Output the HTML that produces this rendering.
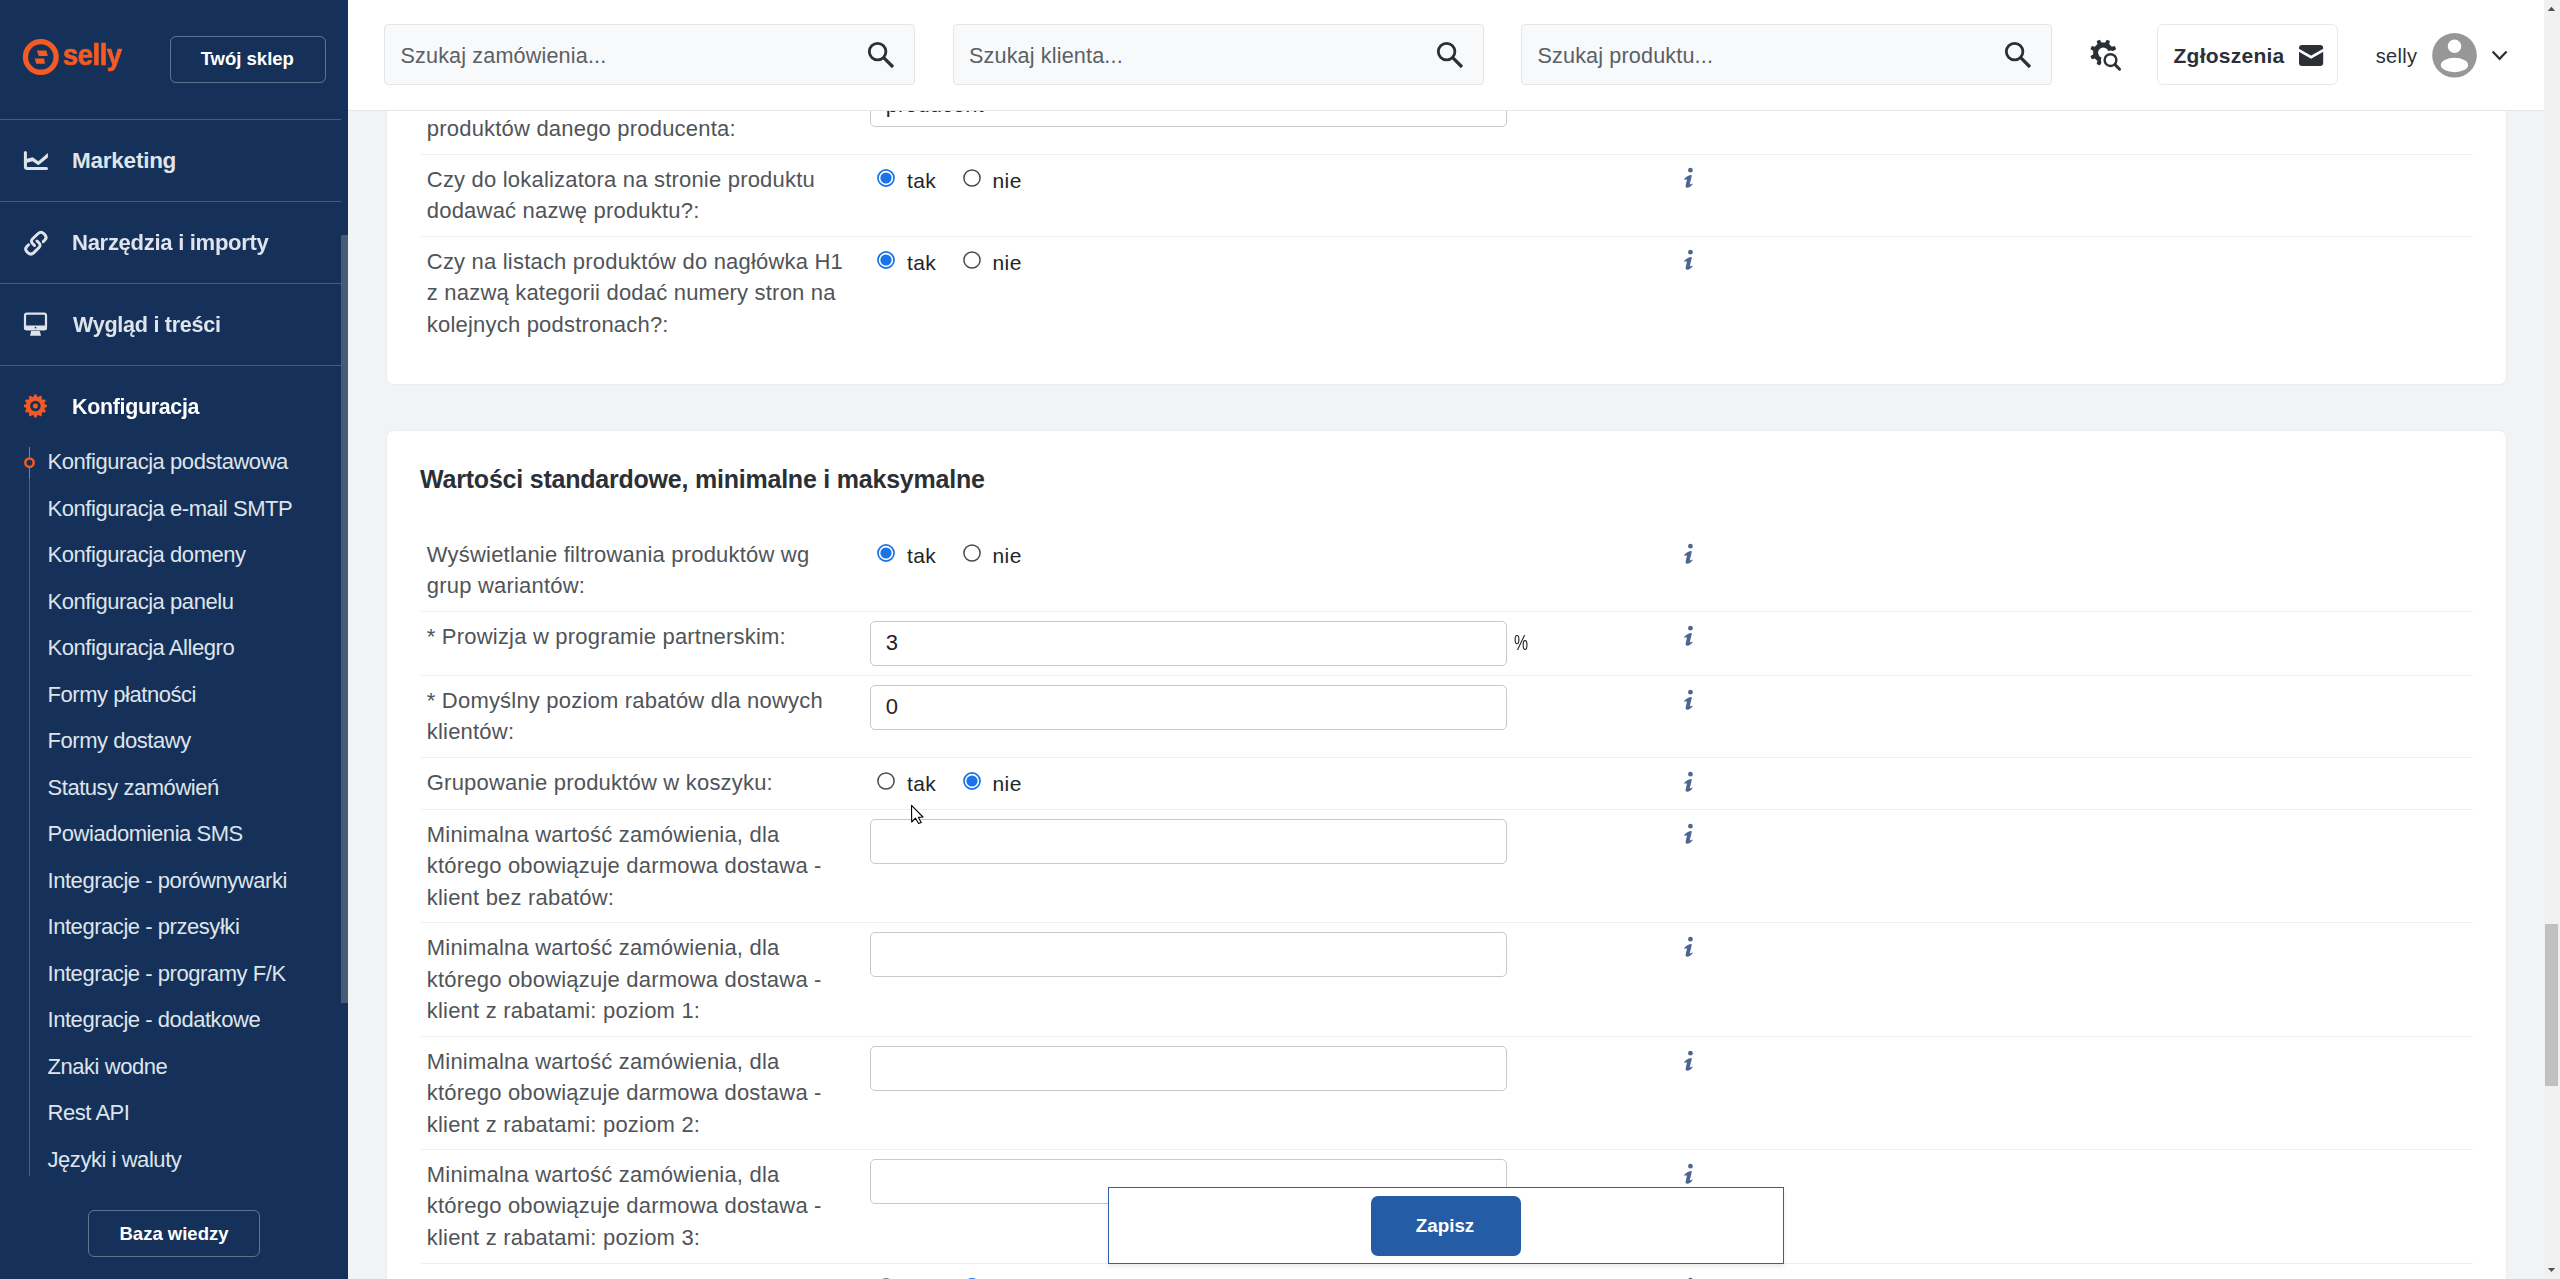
<!DOCTYPE html>
<html><head><meta charset="utf-8"><style>
html,body{margin:0;padding:0;width:2560px;height:1279px;overflow:hidden;background:#f2f3f5;}
body{position:relative;font-family:"Liberation Sans",sans-serif;}
.t{position:absolute;white-space:nowrap;}
svg{overflow:visible}
</style></head><body>
<div style="position:absolute;left:348px;top:110px;width:2196px;height:1169px;background:#f2f3f5"></div>
<div style="position:absolute;left:387px;top:60px;width:2119px;height:324px;background:#fff;border-radius:7px;box-shadow:0 0 0 1px #ebedf0"></div>
<div style="position:absolute;left:387px;top:430.5px;width:2119px;height:1000px;background:#fff;border-radius:7px;box-shadow:0 0 0 1px #ebedf0"></div>
<div class="t" style="left:426.80px;top:86.37px;font-size:22px;line-height:22px;font-weight:400;color:#505459;letter-spacing:0.2px;">Czy wyświetlać ...</div>
<div class="t" style="left:426.80px;top:117.77px;font-size:22px;line-height:22px;font-weight:400;color:#505459;letter-spacing:0.2px;">produktów danego producenta:</div>
<div style="position:absolute;left:869.5px;top:82px;width:637.5px;height:45px;box-sizing:border-box;border:1px solid #c5c9cc;border-radius:5px;background:#fff"></div>
<div class="t" style="left:885.70px;top:94.07px;font-size:22px;line-height:22px;font-weight:400;color:#212529;letter-spacing:0px;">producent</div>
<div style="position:absolute;left:421px;top:154px;width:2052px;height:1px;background:#eeeeed"></div>
<div class="t" style="left:426.80px;top:168.77px;font-size:22px;line-height:22px;font-weight:400;color:#505459;letter-spacing:0.2px;">Czy do lokalizatora na stronie produktu</div>
<div class="t" style="left:426.80px;top:200.17px;font-size:22px;line-height:22px;font-weight:400;color:#505459;letter-spacing:0.2px;">dodawać nazwę produktu?:</div>
<svg style="position:absolute;left:876px;top:167.7px;" width="20" height="20" viewBox="876 167.7 20 20"><circle cx="886" cy="177.7" r="8.05" fill="none" stroke="#1a73e8" stroke-width="1.7"/><circle cx="886" cy="177.7" r="5.6" fill="#1a73e8"/></svg>
<svg style="position:absolute;left:962px;top:167.7px;" width="20" height="20" viewBox="962 167.7 20 20"><circle cx="972" cy="177.7" r="8.1" fill="#fff" stroke="#4a4a4a" stroke-width="1.5"/></svg>
<div class="t" style="left:907.00px;top:170.02px;font-size:21px;line-height:21px;font-weight:400;color:#212529;letter-spacing:0.4px;">tak</div>
<div class="t" style="left:992.50px;top:170.02px;font-size:21px;line-height:21px;font-weight:400;color:#212529;letter-spacing:0.4px;">nie</div>
<svg style="position:absolute;left:1684px;top:168px;" width="10" height="21" viewBox="1684 168 10 21"><g transform="translate(1684 168)" fill="#4e6591"><circle cx="6.45" cy="2.15" r="2.35"/><path d="M0.1,11 C1.5,9.5 4.2,7.3 6.9,7.1 C7.5,7.1 7.9,7.6 7.7,8.3 L5.7,16.5 C6.7,16.3 7.8,15.8 8.9,15.4 C8,17.4 6,19.5 3.6,19.7 C2.3,19.8 1.4,19.2 1.6,17.8 L3,11.5 C2.1,11.5 1.2,11.7 0.4,11.8 Z"/></g></svg>
<div style="position:absolute;left:421px;top:236px;width:2052px;height:1px;background:#eeeeed"></div>
<div class="t" style="left:426.80px;top:250.77px;font-size:22px;line-height:22px;font-weight:400;color:#505459;letter-spacing:0.2px;">Czy na listach produktów do nagłówka H1</div>
<div class="t" style="left:426.80px;top:282.17px;font-size:22px;line-height:22px;font-weight:400;color:#505459;letter-spacing:0.2px;">z nazwą kategorii dodać numery stron na</div>
<div class="t" style="left:426.80px;top:313.57px;font-size:22px;line-height:22px;font-weight:400;color:#505459;letter-spacing:0.2px;">kolejnych podstronach?:</div>
<svg style="position:absolute;left:876px;top:249.7px;" width="20" height="20" viewBox="876 249.7 20 20"><circle cx="886" cy="259.7" r="8.05" fill="none" stroke="#1a73e8" stroke-width="1.7"/><circle cx="886" cy="259.7" r="5.6" fill="#1a73e8"/></svg>
<svg style="position:absolute;left:962px;top:249.7px;" width="20" height="20" viewBox="962 249.7 20 20"><circle cx="972" cy="259.7" r="8.1" fill="#fff" stroke="#4a4a4a" stroke-width="1.5"/></svg>
<div class="t" style="left:907.00px;top:252.02px;font-size:21px;line-height:21px;font-weight:400;color:#212529;letter-spacing:0.4px;">tak</div>
<div class="t" style="left:992.50px;top:252.02px;font-size:21px;line-height:21px;font-weight:400;color:#212529;letter-spacing:0.4px;">nie</div>
<svg style="position:absolute;left:1684px;top:250px;" width="10" height="21" viewBox="1684 250 10 21"><g transform="translate(1684 250)" fill="#4e6591"><circle cx="6.45" cy="2.15" r="2.35"/><path d="M0.1,11 C1.5,9.5 4.2,7.3 6.9,7.1 C7.5,7.1 7.9,7.6 7.7,8.3 L5.7,16.5 C6.7,16.3 7.8,15.8 8.9,15.4 C8,17.4 6,19.5 3.6,19.7 C2.3,19.8 1.4,19.2 1.6,17.8 L3,11.5 C2.1,11.5 1.2,11.7 0.4,11.8 Z"/></g></svg>
<div class="t" style="left:420.10px;top:467.43px;font-size:25px;line-height:25px;font-weight:700;color:#2b3036;letter-spacing:-0.22px;">Wartości standardowe, minimalne i maksymalne</div>
<div class="t" style="left:426.80px;top:543.77px;font-size:22px;line-height:22px;font-weight:400;color:#505459;letter-spacing:0.2px;">Wyświetlanie filtrowania produktów wg</div>
<div class="t" style="left:426.80px;top:575.17px;font-size:22px;line-height:22px;font-weight:400;color:#505459;letter-spacing:0.2px;">grup wariantów:</div>
<svg style="position:absolute;left:876px;top:542.9px;" width="20" height="20" viewBox="876 542.9 20 20"><circle cx="886" cy="552.9" r="8.05" fill="none" stroke="#1a73e8" stroke-width="1.7"/><circle cx="886" cy="552.9" r="5.6" fill="#1a73e8"/></svg>
<svg style="position:absolute;left:962px;top:542.9px;" width="20" height="20" viewBox="962 542.9 20 20"><circle cx="972" cy="552.9" r="8.1" fill="#fff" stroke="#4a4a4a" stroke-width="1.5"/></svg>
<div class="t" style="left:907.00px;top:545.22px;font-size:21px;line-height:21px;font-weight:400;color:#212529;letter-spacing:0.4px;">tak</div>
<div class="t" style="left:992.50px;top:545.22px;font-size:21px;line-height:21px;font-weight:400;color:#212529;letter-spacing:0.4px;">nie</div>
<svg style="position:absolute;left:1684px;top:544px;" width="10" height="21" viewBox="1684 544 10 21"><g transform="translate(1684 544)" fill="#4e6591"><circle cx="6.45" cy="2.15" r="2.35"/><path d="M0.1,11 C1.5,9.5 4.2,7.3 6.9,7.1 C7.5,7.1 7.9,7.6 7.7,8.3 L5.7,16.5 C6.7,16.3 7.8,15.8 8.9,15.4 C8,17.4 6,19.5 3.6,19.7 C2.3,19.8 1.4,19.2 1.6,17.8 L3,11.5 C2.1,11.5 1.2,11.7 0.4,11.8 Z"/></g></svg>
<div style="position:absolute;left:421px;top:611px;width:2052px;height:1px;background:#eeeeed"></div>
<div class="t" style="left:426.80px;top:625.77px;font-size:22px;line-height:22px;font-weight:400;color:#505459;letter-spacing:0.2px;">* Prowizja w programie partnerskim:</div>
<div style="position:absolute;left:869.5px;top:621px;width:637.5px;height:45px;box-sizing:border-box;border:1px solid #c5c9cc;border-radius:5px;background:#fff"></div>
<div class="t" style="left:885.70px;top:632.37px;font-size:22px;line-height:22px;font-weight:400;color:#212529;letter-spacing:0px;">3</div>
<svg style="position:absolute;left:1684px;top:626px;" width="10" height="21" viewBox="1684 626 10 21"><g transform="translate(1684 626)" fill="#4e6591"><circle cx="6.45" cy="2.15" r="2.35"/><path d="M0.1,11 C1.5,9.5 4.2,7.3 6.9,7.1 C7.5,7.1 7.9,7.6 7.7,8.3 L5.7,16.5 C6.7,16.3 7.8,15.8 8.9,15.4 C8,17.4 6,19.5 3.6,19.7 C2.3,19.8 1.4,19.2 1.6,17.8 L3,11.5 C2.1,11.5 1.2,11.7 0.4,11.8 Z"/></g></svg>
<div class="t" style="left:1514.20px;top:632.37px;font-size:22px;line-height:22px;font-weight:400;color:#212529;letter-spacing:0px;transform:scaleX(0.72);transform-origin:0 0">%</div>
<div style="position:absolute;left:421px;top:675px;width:2052px;height:1px;background:#eeeeed"></div>
<div class="t" style="left:426.80px;top:689.77px;font-size:22px;line-height:22px;font-weight:400;color:#505459;letter-spacing:0.2px;">* Domyślny poziom rabatów dla nowych</div>
<div class="t" style="left:426.80px;top:721.17px;font-size:22px;line-height:22px;font-weight:400;color:#505459;letter-spacing:0.2px;">klientów:</div>
<div style="position:absolute;left:869.5px;top:685px;width:637.5px;height:45px;box-sizing:border-box;border:1px solid #c5c9cc;border-radius:5px;background:#fff"></div>
<div class="t" style="left:885.70px;top:696.37px;font-size:22px;line-height:22px;font-weight:400;color:#212529;letter-spacing:0px;">0</div>
<svg style="position:absolute;left:1684px;top:690px;" width="10" height="21" viewBox="1684 690 10 21"><g transform="translate(1684 690)" fill="#4e6591"><circle cx="6.45" cy="2.15" r="2.35"/><path d="M0.1,11 C1.5,9.5 4.2,7.3 6.9,7.1 C7.5,7.1 7.9,7.6 7.7,8.3 L5.7,16.5 C6.7,16.3 7.8,15.8 8.9,15.4 C8,17.4 6,19.5 3.6,19.7 C2.3,19.8 1.4,19.2 1.6,17.8 L3,11.5 C2.1,11.5 1.2,11.7 0.4,11.8 Z"/></g></svg>
<div style="position:absolute;left:421px;top:757px;width:2052px;height:1px;background:#eeeeed"></div>
<div class="t" style="left:426.80px;top:771.77px;font-size:22px;line-height:22px;font-weight:400;color:#505459;letter-spacing:0.2px;">Grupowanie produktów w koszyku:</div>
<svg style="position:absolute;left:876px;top:770.9px;" width="20" height="20" viewBox="876 770.9 20 20"><circle cx="886" cy="780.9" r="8.1" fill="#fff" stroke="#4a4a4a" stroke-width="1.5"/></svg>
<svg style="position:absolute;left:962px;top:770.9px;" width="20" height="20" viewBox="962 770.9 20 20"><circle cx="972" cy="780.9" r="8.05" fill="none" stroke="#1a73e8" stroke-width="1.7"/><circle cx="972" cy="780.9" r="5.6" fill="#1a73e8"/></svg>
<div class="t" style="left:907.00px;top:773.22px;font-size:21px;line-height:21px;font-weight:400;color:#212529;letter-spacing:0.4px;">tak</div>
<div class="t" style="left:992.50px;top:773.22px;font-size:21px;line-height:21px;font-weight:400;color:#212529;letter-spacing:0.4px;">nie</div>
<svg style="position:absolute;left:1684px;top:772px;" width="10" height="21" viewBox="1684 772 10 21"><g transform="translate(1684 772)" fill="#4e6591"><circle cx="6.45" cy="2.15" r="2.35"/><path d="M0.1,11 C1.5,9.5 4.2,7.3 6.9,7.1 C7.5,7.1 7.9,7.6 7.7,8.3 L5.7,16.5 C6.7,16.3 7.8,15.8 8.9,15.4 C8,17.4 6,19.5 3.6,19.7 C2.3,19.8 1.4,19.2 1.6,17.8 L3,11.5 C2.1,11.5 1.2,11.7 0.4,11.8 Z"/></g></svg>
<div style="position:absolute;left:421px;top:809px;width:2052px;height:1px;background:#eeeeed"></div>
<div class="t" style="left:426.80px;top:823.77px;font-size:22px;line-height:22px;font-weight:400;color:#505459;letter-spacing:0.2px;">Minimalna wartość zamówienia, dla</div>
<div class="t" style="left:426.80px;top:855.17px;font-size:22px;line-height:22px;font-weight:400;color:#505459;letter-spacing:0.2px;">którego obowiązuje darmowa dostawa -</div>
<div class="t" style="left:426.80px;top:886.57px;font-size:22px;line-height:22px;font-weight:400;color:#505459;letter-spacing:0.2px;">klient bez rabatów:</div>
<div style="position:absolute;left:869.5px;top:819px;width:637.5px;height:45px;box-sizing:border-box;border:1px solid #c5c9cc;border-radius:5px;background:#fff"></div>
<svg style="position:absolute;left:1684px;top:824px;" width="10" height="21" viewBox="1684 824 10 21"><g transform="translate(1684 824)" fill="#4e6591"><circle cx="6.45" cy="2.15" r="2.35"/><path d="M0.1,11 C1.5,9.5 4.2,7.3 6.9,7.1 C7.5,7.1 7.9,7.6 7.7,8.3 L5.7,16.5 C6.7,16.3 7.8,15.8 8.9,15.4 C8,17.4 6,19.5 3.6,19.7 C2.3,19.8 1.4,19.2 1.6,17.8 L3,11.5 C2.1,11.5 1.2,11.7 0.4,11.8 Z"/></g></svg>
<div style="position:absolute;left:421px;top:922px;width:2052px;height:1px;background:#eeeeed"></div>
<div class="t" style="left:426.80px;top:937.17px;font-size:22px;line-height:22px;font-weight:400;color:#505459;letter-spacing:0.2px;">Minimalna wartość zamówienia, dla</div>
<div class="t" style="left:426.80px;top:968.57px;font-size:22px;line-height:22px;font-weight:400;color:#505459;letter-spacing:0.2px;">którego obowiązuje darmowa dostawa -</div>
<div class="t" style="left:426.80px;top:999.97px;font-size:22px;line-height:22px;font-weight:400;color:#505459;letter-spacing:0.2px;">klient z rabatami: poziom 1:</div>
<div style="position:absolute;left:869.5px;top:932px;width:637.5px;height:45px;box-sizing:border-box;border:1px solid #c5c9cc;border-radius:5px;background:#fff"></div>
<svg style="position:absolute;left:1684px;top:937px;" width="10" height="21" viewBox="1684 937 10 21"><g transform="translate(1684 937)" fill="#4e6591"><circle cx="6.45" cy="2.15" r="2.35"/><path d="M0.1,11 C1.5,9.5 4.2,7.3 6.9,7.1 C7.5,7.1 7.9,7.6 7.7,8.3 L5.7,16.5 C6.7,16.3 7.8,15.8 8.9,15.4 C8,17.4 6,19.5 3.6,19.7 C2.3,19.8 1.4,19.2 1.6,17.8 L3,11.5 C2.1,11.5 1.2,11.7 0.4,11.8 Z"/></g></svg>
<div style="position:absolute;left:421px;top:1036px;width:2052px;height:1px;background:#eeeeed"></div>
<div class="t" style="left:426.80px;top:1050.77px;font-size:22px;line-height:22px;font-weight:400;color:#505459;letter-spacing:0.2px;">Minimalna wartość zamówienia, dla</div>
<div class="t" style="left:426.80px;top:1082.17px;font-size:22px;line-height:22px;font-weight:400;color:#505459;letter-spacing:0.2px;">którego obowiązuje darmowa dostawa -</div>
<div class="t" style="left:426.80px;top:1113.57px;font-size:22px;line-height:22px;font-weight:400;color:#505459;letter-spacing:0.2px;">klient z rabatami: poziom 2:</div>
<div style="position:absolute;left:869.5px;top:1046px;width:637.5px;height:45px;box-sizing:border-box;border:1px solid #c5c9cc;border-radius:5px;background:#fff"></div>
<svg style="position:absolute;left:1684px;top:1051px;" width="10" height="21" viewBox="1684 1051 10 21"><g transform="translate(1684 1051)" fill="#4e6591"><circle cx="6.45" cy="2.15" r="2.35"/><path d="M0.1,11 C1.5,9.5 4.2,7.3 6.9,7.1 C7.5,7.1 7.9,7.6 7.7,8.3 L5.7,16.5 C6.7,16.3 7.8,15.8 8.9,15.4 C8,17.4 6,19.5 3.6,19.7 C2.3,19.8 1.4,19.2 1.6,17.8 L3,11.5 C2.1,11.5 1.2,11.7 0.4,11.8 Z"/></g></svg>
<div style="position:absolute;left:421px;top:1149px;width:2052px;height:1px;background:#eeeeed"></div>
<div class="t" style="left:426.80px;top:1163.77px;font-size:22px;line-height:22px;font-weight:400;color:#505459;letter-spacing:0.2px;">Minimalna wartość zamówienia, dla</div>
<div class="t" style="left:426.80px;top:1195.17px;font-size:22px;line-height:22px;font-weight:400;color:#505459;letter-spacing:0.2px;">którego obowiązuje darmowa dostawa -</div>
<div class="t" style="left:426.80px;top:1226.57px;font-size:22px;line-height:22px;font-weight:400;color:#505459;letter-spacing:0.2px;">klient z rabatami: poziom 3:</div>
<div style="position:absolute;left:869.5px;top:1159px;width:637.5px;height:45px;box-sizing:border-box;border:1px solid #c5c9cc;border-radius:5px;background:#fff"></div>
<svg style="position:absolute;left:1684px;top:1164px;" width="10" height="21" viewBox="1684 1164 10 21"><g transform="translate(1684 1164)" fill="#4e6591"><circle cx="6.45" cy="2.15" r="2.35"/><path d="M0.1,11 C1.5,9.5 4.2,7.3 6.9,7.1 C7.5,7.1 7.9,7.6 7.7,8.3 L5.7,16.5 C6.7,16.3 7.8,15.8 8.9,15.4 C8,17.4 6,19.5 3.6,19.7 C2.3,19.8 1.4,19.2 1.6,17.8 L3,11.5 C2.1,11.5 1.2,11.7 0.4,11.8 Z"/></g></svg>
<div style="position:absolute;left:421px;top:1263px;width:2052px;height:1px;background:#eeeeed"></div>
<svg style="position:absolute;left:876px;top:1276.9px;" width="20" height="20" viewBox="876 1276.9 20 20"><circle cx="886" cy="1286.9" r="8.1" fill="#fff" stroke="#4a4a4a" stroke-width="1.5"/></svg>
<svg style="position:absolute;left:962px;top:1276.9px;" width="20" height="20" viewBox="962 1276.9 20 20"><circle cx="972" cy="1286.9" r="8.05" fill="none" stroke="#1a73e8" stroke-width="1.7"/><circle cx="972" cy="1286.9" r="5.6" fill="#1a73e8"/></svg>
<div class="t" style="left:907.00px;top:1279.22px;font-size:21px;line-height:21px;font-weight:400;color:#212529;letter-spacing:0.4px;">tak</div>
<div class="t" style="left:992.50px;top:1279.22px;font-size:21px;line-height:21px;font-weight:400;color:#212529;letter-spacing:0.4px;">nie</div>
<svg style="position:absolute;left:1684px;top:1278px;" width="10" height="21" viewBox="1684 1278 10 21"><g transform="translate(1684 1278)" fill="#4e6591"><circle cx="6.45" cy="2.15" r="2.35"/><path d="M0.1,11 C1.5,9.5 4.2,7.3 6.9,7.1 C7.5,7.1 7.9,7.6 7.7,8.3 L5.7,16.5 C6.7,16.3 7.8,15.8 8.9,15.4 C8,17.4 6,19.5 3.6,19.7 C2.3,19.8 1.4,19.2 1.6,17.8 L3,11.5 C2.1,11.5 1.2,11.7 0.4,11.8 Z"/></g></svg>
<svg style="position:absolute;left:905px;top:800px;" width="25" height="30" viewBox="905 800 25 30"><path d="M911.5,805.3 L911.7,822 L915.5,818.2 L918.6,823.6 L921.2,822.4 L918.4,817.4 L923,817 Z" fill="#fff" stroke="#000" stroke-width="1.1" stroke-linejoin="round"/></svg>
<div style="position:absolute;left:1107.5px;top:1187px;width:676.5px;height:77px;box-sizing:border-box;background:#fff;border:1.5px solid #2d62a8;box-shadow:0 3px 4px rgba(0,0,0,0.08)"></div>
<div style="position:absolute;left:1371px;top:1196px;width:150px;height:60px;background:#245ca6;border-radius:7px"></div>
<div class="t" style="left:1415.80px;top:1216.88px;font-size:18.8px;line-height:18.8px;font-weight:700;color:#fff;letter-spacing:0px;">Zapisz</div>
<div style="position:absolute;left:348px;top:0px;width:2196px;height:110px;background:#fff;border-bottom:1px solid #e3e5e8;box-sizing:border-box;height:111px"></div>
<div style="position:absolute;left:384px;top:24.4px;width:531px;height:61px;box-sizing:border-box;background:#f8f9fa;border:1px solid #e3e6e9;border-radius:4px"></div>
<div class="t" style="left:400.50px;top:44.51px;font-size:21.6px;line-height:21.6px;font-weight:400;color:#5a6066;letter-spacing:0.15px;">Szukaj zamówienia...</div>
<svg style="position:absolute;left:854px;top:30px;" width="40" height="45" viewBox="854 30 40 45"><circle cx="877.6" cy="51.6" r="8.3" fill="none" stroke="#2b3036" stroke-width="2.8"/><line x1="883.4" y1="57.4" x2="893.0" y2="67.0" stroke="#2b3036" stroke-width="3.2"/></svg>
<div style="position:absolute;left:952.5px;top:24.4px;width:531px;height:61px;box-sizing:border-box;background:#f8f9fa;border:1px solid #e3e6e9;border-radius:4px"></div>
<div class="t" style="left:969.00px;top:44.51px;font-size:21.6px;line-height:21.6px;font-weight:400;color:#5a6066;letter-spacing:0.15px;">Szukaj klienta...</div>
<svg style="position:absolute;left:1422.5px;top:30px;" width="40" height="45" viewBox="1422.5 30 40 45"><circle cx="1446.1" cy="51.6" r="8.3" fill="none" stroke="#2b3036" stroke-width="2.8"/><line x1="1451.8999999999999" y1="57.4" x2="1461.5" y2="67.0" stroke="#2b3036" stroke-width="3.2"/></svg>
<div style="position:absolute;left:1521px;top:24.4px;width:531px;height:61px;box-sizing:border-box;background:#f8f9fa;border:1px solid #e3e6e9;border-radius:4px"></div>
<div class="t" style="left:1537.50px;top:44.51px;font-size:21.6px;line-height:21.6px;font-weight:400;color:#5a6066;letter-spacing:0.15px;">Szukaj produktu...</div>
<svg style="position:absolute;left:1991px;top:30px;" width="40" height="45" viewBox="1991 30 40 45"><circle cx="2014.6" cy="51.6" r="8.3" fill="none" stroke="#2b3036" stroke-width="2.8"/><line x1="2020.3999999999999" y1="57.4" x2="2030.0" y2="67.0" stroke="#2b3036" stroke-width="3.2"/></svg>
<svg style="position:absolute;left:2085px;top:34px;" width="40" height="42" viewBox="2085 34 40 42"><defs><mask id="gm"><rect x="2085" y="34" width="40" height="42" fill="#fff"/><circle cx="2103.3" cy="52.6" r="5.2" fill="#000"/><circle cx="2110.5" cy="60.1" r="9.6" fill="#000"/></mask></defs><path d="M2105.23,42.48 L2106.71,39.74 L2109.98,41.10 L2109.09,44.08 L2111.82,46.81 L2114.80,45.92 L2116.16,49.19 L2113.42,50.67 L2113.42,54.53 L2116.16,56.01 L2114.80,59.28 L2111.82,58.39 L2109.09,61.12 L2109.98,64.10 L2106.71,65.46 L2105.23,62.72 L2101.37,62.72 L2099.89,65.46 L2096.62,64.10 L2097.51,61.12 L2094.78,58.39 L2091.80,59.28 L2090.44,56.01 L2093.18,54.53 L2093.18,50.67 L2090.44,49.19 L2091.80,45.92 L2094.78,46.81 L2097.51,44.08 L2096.62,41.10 L2099.89,39.74 L2101.37,42.48 Z" fill="#2b3036" mask="url(#gm)"/><circle cx="2110.5" cy="60.1" r="5.9" fill="none" stroke="#2b3036" stroke-width="2.4"/><line x1="2115" y1="64.6" x2="2119.6" y2="69.2" stroke="#2b3036" stroke-width="2.9" stroke-linecap="round"/></svg>
<div style="position:absolute;left:2157.3px;top:24.3px;width:181.2px;height:61.2px;box-sizing:border-box;border:1px solid #e6e8eb;border-radius:6px;background:#fff"></div>
<div class="t" style="left:2173.50px;top:44.52px;font-size:21px;line-height:21px;font-weight:700;color:#2b3036;letter-spacing:0.25px;">Zgłoszenia</div>
<svg style="position:absolute;left:2297px;top:43px;" width="28" height="25" viewBox="2297 43 28 25"><rect x="2299" y="45" width="24.2" height="21" rx="3.2" fill="#2b3036"/><polyline points="2298.3,49.9 2311.1,57.2 2323.9,49.9" fill="none" stroke="#fff" stroke-width="2.6"/></svg>
<div class="t" style="left:2375.70px;top:45.77px;font-size:20px;line-height:20px;font-weight:400;color:#2b3036;letter-spacing:0.35px;">selly</div>
<svg style="position:absolute;left:2430px;top:31px;" width="50" height="50" viewBox="2430 31 50 50"><circle cx="2454.5" cy="55.3" r="22.3" fill="#979797"/><circle cx="2454.5" cy="46.3" r="6.7" fill="#fff"/><ellipse cx="2454.5" cy="65" rx="13.7" ry="7.2" fill="#fff"/></svg>
<svg style="position:absolute;left:2488px;top:46px;" width="22" height="18" viewBox="2488 46 22 18"><polyline points="2492.6,51.6 2499.6,58.8 2506.6,51.6" fill="none" stroke="#2b3036" stroke-width="2.2"/></svg>
<div style="position:absolute;left:2544px;top:0px;width:16px;height:1279px;background:#f1f1f1"></div>
<div style="position:absolute;left:2545px;top:924.2px;width:12.8px;height:161.4px;background:#c1c1c1"></div>
<svg style="position:absolute;left:2544px;top:0px;" width="16" height="16" viewBox="2544 0 16 16"><polygon points="2547.8,11 2555.1,11 2551.45,6.8" fill="#505050"/></svg>
<svg style="position:absolute;left:2544px;top:1262px;" width="16" height="17" viewBox="2544 1262 16 17"><polygon points="2547.9,1268 2555.1,1268 2551.5,1272" fill="#505050"/></svg>
<div style="position:absolute;left:0px;top:0px;width:348px;height:1279px;background:#153159"></div>
<svg style="position:absolute;left:18px;top:34px;" width="110" height="42" viewBox="18 34 110 42"><circle cx="40.8" cy="56.9" r="15.35" fill="none" stroke="#f35a24" stroke-width="5.3"/><polygon points="36.9,50.6 46.25,50.6 47.8,55.9 38.75,55.9" fill="#f35a24"/><polygon points="34.7,58.4 44,58.4 45,63.75 36.25,63.75" fill="#f35a24"/></svg>
<div class="t" style="left:62.80px;top:39.80px;font-size:30px;line-height:30px;font-weight:700;color:#f35a24;letter-spacing:-0.6px;transform:scaleX(0.92);transform-origin:0 0;-webkit-text-stroke:0.7px #f35a24">selly</div>
<div style="position:absolute;left:170.2px;top:36px;width:155.8px;height:47px;box-sizing:border-box;border:1px solid rgba(255,255,255,0.32);border-radius:6px"></div>
<div class="t" style="left:200.70px;top:50.34px;font-size:18.5px;line-height:18.5px;font-weight:700;color:#fff;letter-spacing:0px;">Twój sklep</div>
<div style="position:absolute;left:0px;top:119px;width:341px;height:1px;background:#485c7b"></div>
<div style="position:absolute;left:0px;top:201px;width:341px;height:1px;background:#485c7b"></div>
<div style="position:absolute;left:0px;top:283px;width:341px;height:1px;background:#485c7b"></div>
<div style="position:absolute;left:0px;top:365px;width:341px;height:1px;background:#485c7b"></div>
<svg style="position:absolute;left:20px;top:146px;" width="32" height="28" viewBox="20 146 32 28"><path d="M25.4,152.5 L25.4,166.5 Q25.4,168.5 27.4,168.5 L46.5,168.5" fill="none" stroke="#dfe4ec" stroke-width="3" stroke-linecap="round"/><polygon points="26,159.1 32.6,157.2 38.4,161.2 47.9,153.1 47.9,157.4 38.4,165.3 32.6,161.2 26,162.9" fill="#dfe4ec"/></svg>
<svg style="position:absolute;left:20px;top:226px;" width="32" height="34" viewBox="20 226 32 34"><g fill="none" stroke="#dfe4ec" stroke-width="3.2" stroke-linecap="round" transform="translate(36.8 243.2) scale(0.92) translate(-36 -243)"><path d="M33.5,245.5 L31.5,243.5 Q28.8,240.8 31.5,238.1 L37.5,232.5 Q40.5,229.8 43.5,232.5 L44.8,233.8 Q47.5,236.8 44.8,239.5 L43,241.3"/><path d="M36.2,240.6 L38.2,242.6 Q40.9,245.3 38.2,248 L32.5,253.5 Q29.5,256.2 26.5,253.5 L25.2,252.2 Q22.5,249.2 25.2,246.5 L27,244.7"/></g></svg>
<svg style="position:absolute;left:20px;top:308px;" width="32" height="32" viewBox="20 308 32 32"><rect x="25" y="313.7" width="21" height="15.6" rx="2" fill="none" stroke="#dfe4ec" stroke-width="2.2"/><rect x="24" y="325.5" width="23" height="4.6" rx="1.5" fill="#dfe4ec"/><circle cx="35.5" cy="327.6" r="0.9" fill="#153159"/><polygon points="31.2,331 39.8,331 41,335.8 30,335.8" fill="#dfe4ec"/></svg>
<svg style="position:absolute;left:20px;top:390px;" width="32" height="32" viewBox="20 390 32 32"><path d="M33.85,396.53 L34.26,394.56 L36.54,394.56 L36.95,396.53 L38.79,397.02 L40.13,395.52 L42.11,396.66 L41.48,398.57 L42.83,399.92 L44.74,399.29 L45.88,401.27 L44.38,402.61 L44.87,404.45 L46.84,404.86 L46.84,407.14 L44.87,407.55 L44.38,409.39 L45.88,410.73 L44.74,412.71 L42.83,412.08 L41.48,413.43 L42.11,415.34 L40.13,416.48 L38.79,414.98 L36.95,415.47 L36.54,417.44 L34.26,417.44 L33.85,415.47 L32.01,414.98 L30.67,416.48 L28.69,415.34 L29.32,413.43 L27.97,412.08 L26.06,412.71 L24.92,410.73 L26.42,409.39 L25.93,407.55 L23.96,407.14 L23.96,404.86 L25.93,404.45 L26.42,402.61 L24.92,401.27 L26.06,399.29 L27.97,399.92 L29.32,398.57 L28.69,396.66 L30.67,395.52 L32.01,397.02 Z" fill="#f35a24"/><circle cx="35.4" cy="406" r="5.3" fill="#153159"/><circle cx="35.4" cy="406" r="2.5" fill="#f35a24"/></svg>
<div class="t" style="left:72.10px;top:149.75px;font-size:22.5px;line-height:22.5px;font-weight:700;color:#dfe4ec;letter-spacing:-0.25px;transform:scaleX(1.0);transform-origin:0 0">Marketing</div>
<div class="t" style="left:71.80px;top:231.75px;font-size:22.5px;line-height:22.5px;font-weight:700;color:#dfe4ec;letter-spacing:-0.3px;transform:scaleX(0.98);transform-origin:0 0">Narzędzia i importy</div>
<div class="t" style="left:72.50px;top:313.75px;font-size:22.5px;line-height:22.5px;font-weight:700;color:#dfe4ec;letter-spacing:-0.3px;transform:scaleX(0.96);transform-origin:0 0">Wygląd i treści</div>
<div class="t" style="left:71.80px;top:395.75px;font-size:22.5px;line-height:22.5px;font-weight:700;color:#ffffff;letter-spacing:-0.3px;transform:scaleX(0.95);transform-origin:0 0">Konfiguracja</div>
<div class="t" style="left:47.50px;top:451.27px;font-size:22px;line-height:22px;font-weight:400;color:#dfe4ec;letter-spacing:-0.45px;">Konfiguracja podstawowa</div>
<div class="t" style="left:47.50px;top:497.77px;font-size:22px;line-height:22px;font-weight:400;color:#dfe4ec;letter-spacing:-0.45px;">Konfiguracja e-mail SMTP</div>
<div class="t" style="left:47.50px;top:544.27px;font-size:22px;line-height:22px;font-weight:400;color:#dfe4ec;letter-spacing:-0.45px;">Konfiguracja domeny</div>
<div class="t" style="left:47.50px;top:590.77px;font-size:22px;line-height:22px;font-weight:400;color:#dfe4ec;letter-spacing:-0.45px;">Konfiguracja panelu</div>
<div class="t" style="left:47.50px;top:637.27px;font-size:22px;line-height:22px;font-weight:400;color:#dfe4ec;letter-spacing:-0.45px;">Konfiguracja Allegro</div>
<div class="t" style="left:47.50px;top:683.77px;font-size:22px;line-height:22px;font-weight:400;color:#dfe4ec;letter-spacing:-0.45px;">Formy płatności</div>
<div class="t" style="left:47.50px;top:730.27px;font-size:22px;line-height:22px;font-weight:400;color:#dfe4ec;letter-spacing:-0.45px;">Formy dostawy</div>
<div class="t" style="left:47.50px;top:776.77px;font-size:22px;line-height:22px;font-weight:400;color:#dfe4ec;letter-spacing:-0.45px;">Statusy zamówień</div>
<div class="t" style="left:47.50px;top:823.27px;font-size:22px;line-height:22px;font-weight:400;color:#dfe4ec;letter-spacing:-0.45px;">Powiadomienia SMS</div>
<div class="t" style="left:47.50px;top:869.77px;font-size:22px;line-height:22px;font-weight:400;color:#dfe4ec;letter-spacing:-0.45px;">Integracje - porównywarki</div>
<div class="t" style="left:47.50px;top:916.27px;font-size:22px;line-height:22px;font-weight:400;color:#dfe4ec;letter-spacing:-0.45px;">Integracje - przesyłki</div>
<div class="t" style="left:47.50px;top:962.77px;font-size:22px;line-height:22px;font-weight:400;color:#dfe4ec;letter-spacing:-0.45px;">Integracje - programy F/K</div>
<div class="t" style="left:47.50px;top:1009.27px;font-size:22px;line-height:22px;font-weight:400;color:#dfe4ec;letter-spacing:-0.45px;">Integracje - dodatkowe</div>
<div class="t" style="left:47.50px;top:1055.77px;font-size:22px;line-height:22px;font-weight:400;color:#dfe4ec;letter-spacing:-0.45px;">Znaki wodne</div>
<div class="t" style="left:47.50px;top:1102.27px;font-size:22px;line-height:22px;font-weight:400;color:#dfe4ec;letter-spacing:-0.45px;">Rest API</div>
<div class="t" style="left:47.50px;top:1148.77px;font-size:22px;line-height:22px;font-weight:400;color:#dfe4ec;letter-spacing:-0.45px;">Języki i waluty</div>
<div style="position:absolute;left:29px;top:447px;width:1px;height:729px;background:#4a5e7c"></div>
<div style="position:absolute;left:29px;top:447px;width:1px;height:32px;background:#f35a24"></div>
<svg style="position:absolute;left:20px;top:453px;" width="20" height="20" viewBox="20 453 20 20"><circle cx="29.5" cy="462.7" r="4.2" fill="#153159" stroke="#f35a24" stroke-width="2.5"/></svg>
<div style="position:absolute;left:88px;top:1210.2px;width:171.5px;height:47.2px;box-sizing:border-box;border:1px solid rgba(255,255,255,0.32);border-radius:6px"></div>
<div class="t" style="left:119.50px;top:1224.54px;font-size:18.5px;line-height:18.5px;font-weight:700;color:#fff;letter-spacing:0px;">Baza wiedzy</div>
<div style="position:absolute;left:341px;top:234.8px;width:7px;height:768.2px;background:#475b78"></div>
</body></html>
